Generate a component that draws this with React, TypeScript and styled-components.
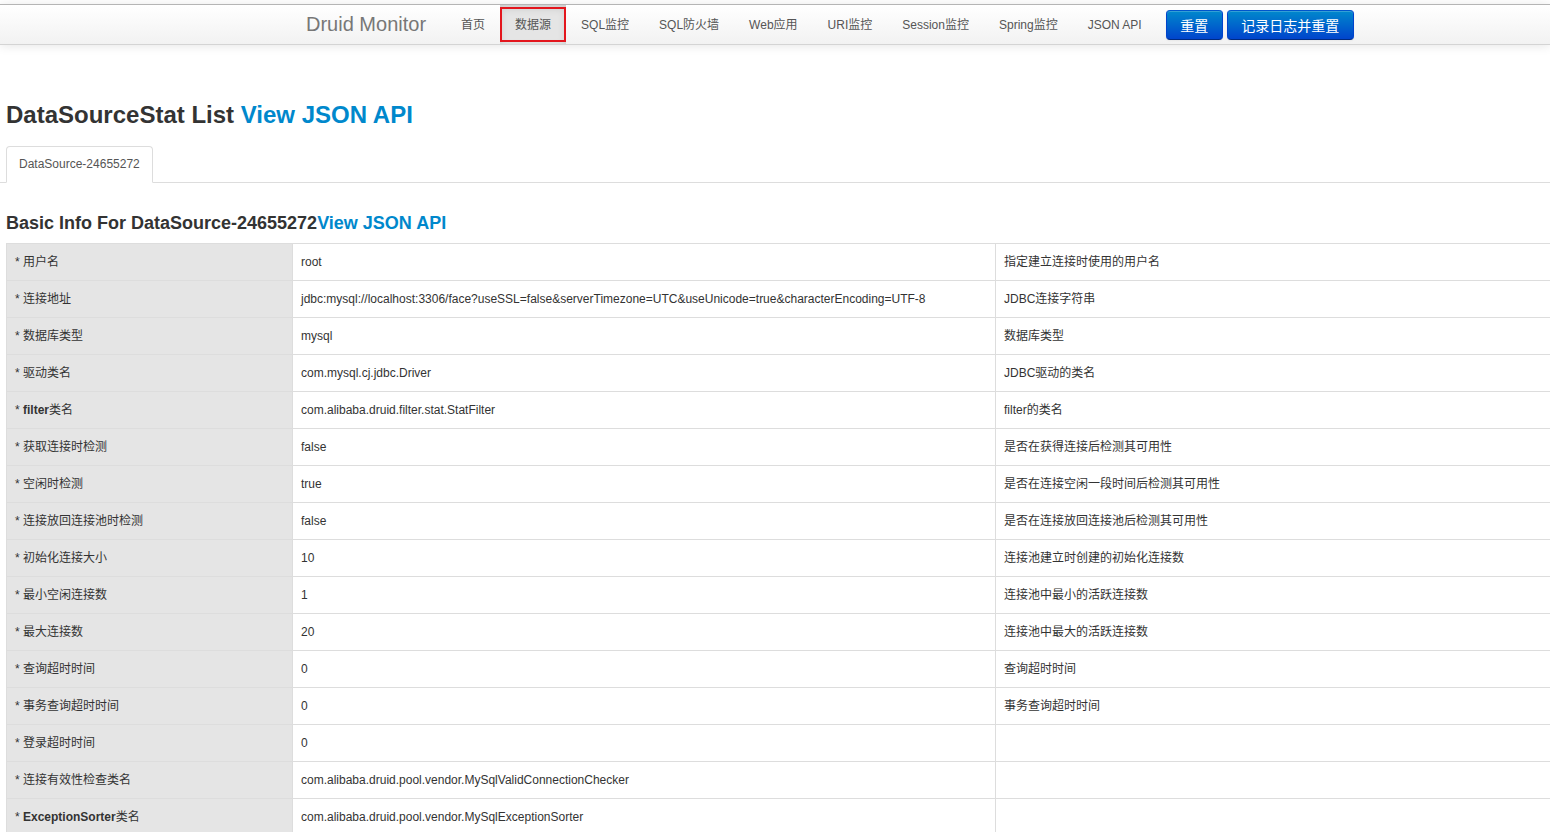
import React from "react";
import styled, { createGlobalStyle } from "styled-components";

const GlobalStyle = createGlobalStyle`
  html, body {
    margin: 0;
    padding: 0;
    overflow: hidden;
    background: #fff;
  }
  body {
    font-family: "Liberation Sans", Arial, "Noto Sans CJK SC", sans-serif;
    font-size: 12px;
    line-height: 20px;
    color: #333;
  }
`;

const Navbar = styled.div`
  margin-top: 4px;
  height: 41px;
  box-sizing: border-box;
  border-top: 1px solid #b5b5b5;
  border-bottom: 1px solid #d4d4d4;
  background: linear-gradient(to bottom, #ffffff, #f2f2f2);
  box-shadow: 0 1px 10px rgba(0, 0, 0, 0.1);
  display: flex;
  align-items: stretch;
  padding-left: 306px;
`;

const Brand = styled.a`
  font-size: 20px;
  font-weight: 200;
  color: #777;
  display: flex;
  align-items: center;
  margin-right: 20px;
  padding-bottom: 1px;
  text-decoration: none;
`;

const Nav = styled.ul`
  list-style: none;
  margin: 0;
  padding: 0;
  display: flex;
  align-items: stretch;
`;

const NavItem = styled.li<{ $active?: boolean }>`
  position: relative;
  display: flex;
  align-items: center;
  padding: 0 15px;
  color: #555;
  font-size: 12px;
  cursor: pointer;
  background: ${(p) => (p.$active ? "#e5e5e5" : "transparent")};
  box-shadow: ${(p) =>
    p.$active ? "inset 0 3px 8px rgba(0, 0, 0, 0.125)" : "none"};
  ${(p) =>
    p.$active &&
    `
    &::after {
      content: "";
      position: absolute;
      left: 0;
      right: 0;
      top: 2px;
      bottom: 2px;
      border: 2px solid #e3161d;
    }
  `}
`;

const ButtonGroup = styled.div`
  display: flex;
  align-items: center;
  gap: 4px;
  margin-left: 9px;
`;

const NavButton = styled.button`
  height: 30px;
  padding: 0 13.5px;
  font-family: inherit;
  font-size: 14px;
  color: #fff;
  border: 1px solid #0044aa;
  border-color: #0055cc #0044cc #002a80;
  border-radius: 4px;
  background: linear-gradient(to bottom, #0088cc, #0044cc);
  box-shadow: inset 0 1px 0 rgba(255, 255, 255, 0.2), 0 1px 2px rgba(0, 0, 0, 0.05);
  cursor: pointer;
`;

const Content = styled.div`
  padding: 0 0 0 6px;
`;

const Title = styled.h1`
  margin: 55px 0 16px;
  font-size: 24px;
  line-height: 30px;
  font-weight: bold;
  color: #333;
`;

const Link = styled.a`
  color: #0088cc;
  text-decoration: none;
`;

const Tabs = styled.ul`
  list-style: none;
  margin: 0 0 0 -6px;
  padding: 0 0 0 6px;
  display: flex;
  border-bottom: 1px solid #ddd;
`;

const Tab = styled.li`
  margin-bottom: -1px;
  padding: 7px 12px 8px;
  line-height: 20px;
  color: #555;
  background: #fff;
  border: 1px solid #ddd;
  border-bottom-color: transparent;
  border-radius: 4px 4px 0 0;
`;

const SubTitle = styled.h3`
  margin: 28px 0 8px;
  font-size: 18px;
  line-height: 24px;
  font-weight: bold;
  color: #333;
`;

const Table = styled.table`
  width: 1620px;
  table-layout: fixed;
  border-collapse: collapse;
`;

const Cell = styled.td<{ $label?: boolean }>`
  height: 20px;
  padding: 8px;
  border: 1px solid #ddd;
  line-height: 20px;
  font-size: 12px;
  vertical-align: top;
  white-space: nowrap;
  background: ${(p) => (p.$label ? "#e5e5e5" : "#fff")};
`;

const Latin = styled.span`
  font-weight: bold;
`;

type Row = [string, string, string];

const rows: Row[] = [
  ["* 用户名", "root", "指定建立连接时使用的用户名"],
  [
    "* 连接地址",
    "jdbc:mysql://localhost:3306/face?useSSL=false&serverTimezone=UTC&useUnicode=true&characterEncoding=UTF-8",
    "JDBC连接字符串",
  ],
  ["* 数据库类型", "mysql", "数据库类型"],
  ["* 驱动类名", "com.mysql.cj.jdbc.Driver", "JDBC驱动的类名"],
  ["* filter类名", "com.alibaba.druid.filter.stat.StatFilter", "filter的类名"],
  ["* 获取连接时检测", "false", "是否在获得连接后检测其可用性"],
  ["* 空闲时检测", "true", "是否在连接空闲一段时间后检测其可用性"],
  ["* 连接放回连接池时检测", "false", "是否在连接放回连接池后检测其可用性"],
  ["* 初始化连接大小", "10", "连接池建立时创建的初始化连接数"],
  ["* 最小空闲连接数", "1", "连接池中最小的活跃连接数"],
  ["* 最大连接数", "20", "连接池中最大的活跃连接数"],
  ["* 查询超时时间", "0", "查询超时时间"],
  ["* 事务查询超时时间", "0", "事务查询超时时间"],
  ["* 登录超时时间", "0", ""],
  ["* 连接有效性检查类名", "com.alibaba.druid.pool.vendor.MySqlValidConnectionChecker", ""],
  ["* ExceptionSorter类名", "com.alibaba.druid.pool.vendor.MySqlExceptionSorter", ""],
  ["* 默认autocommit设置", "true", "对于连接是否是自动提交的"],
];

const navItems = [
  "首页",
  "数据源",
  "SQL监控",
  "SQL防火墙",
  "Web应用",
  "URI监控",
  "Session监控",
  "Spring监控",
  "JSON API",
];

// latin words in the labels are bold, chinese stays regular
const LabelText: React.FC<{ text: string }> = ({ text }) => (
  <>
    {text.split(/([A-Za-z]+)/).map((part, i) =>
      /^[A-Za-z]+$/.test(part) ? <Latin key={i}>{part}</Latin> : part
    )}
  </>
);

const App: React.FC = () => {
  return (
    <>
      <GlobalStyle />
      <Navbar>
        <Brand>Druid Monitor</Brand>
        <Nav>
          {navItems.map((item) => (
            <NavItem key={item} $active={item === "数据源"}>
              {item}
            </NavItem>
          ))}
        </Nav>
        <ButtonGroup>
          <NavButton>重置</NavButton>
          <NavButton>记录日志并重置</NavButton>
        </ButtonGroup>
      </Navbar>
      <Content>
        <Title>
          DataSourceStat List <Link>View JSON API</Link>
        </Title>
        <Tabs>
          <Tab>DataSource-24655272</Tab>
        </Tabs>
        <SubTitle>
          Basic Info For DataSource-24655272<Link>View JSON API</Link>
        </SubTitle>
        <Table>
          <colgroup>
            <col style={{ width: 286 }} />
            <col style={{ width: 703 }} />
            <col />
          </colgroup>
          <tbody>
            {rows.map(([label, value, desc]) => (
              <tr key={label}>
                <Cell $label>
                  <LabelText text={label} />
                </Cell>
                <Cell>{value}</Cell>
                <Cell>{desc}</Cell>
              </tr>
            ))}
          </tbody>
        </Table>
      </Content>
    </>
  );
};

export default App;
